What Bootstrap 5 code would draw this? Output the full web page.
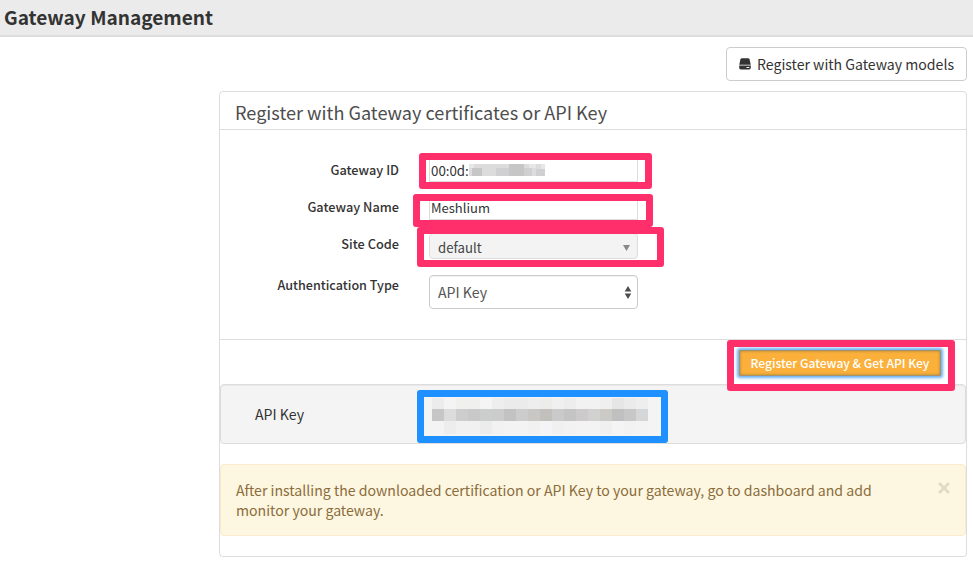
<!DOCTYPE html>
<html lang="en">
<head>
<meta charset="utf-8">
<meta name="viewport" content="width=device-width, initial-scale=1">
<title>Gateway Management</title>
<link href="https://cdn.jsdelivr.net/npm/bootstrap@5.3.0/dist/css/bootstrap.min.css" rel="stylesheet">
<style>
body{font-family:"Noto Sans CJK KR","Noto Sans",sans-serif;font-size:14.12px;line-height:20px;color:#333;background:#fff}
.page-bar{height:37px;background:#ebebeb;border-bottom:2px solid #dedede;padding-left:4px}
.page-bar h1{font-size:19.1px;font-weight:700;line-height:34px;color:#333}
.tools{padding:10px 6px 0 0}
.btn-models{--bs-btn-font-size:14.1px;--bs-btn-line-height:20px;--bs-btn-color:#333;--bs-btn-border-color:#ccc;--bs-btn-border-radius:4px;--bs-btn-bg:#fff;width:241px;height:34px;padding:0 0 1px}
.btn-models svg{margin-right:6px}
.panel{width:748px;height:466px;margin:10px 6px 0 auto;border:1px solid #ddd;border-radius:4px;box-shadow:0 1px 1px rgba(0,0,0,.05)}
.panel-head{height:38px;border-bottom:1px solid #ddd;padding-left:15px;font-size:18.13px;line-height:41px;color:#4d4d4d}
.form-area{height:210px;padding-top:22px;border-bottom:1px solid #ddd}
.field-row{display:grid;grid-template-columns:179px 209px;column-gap:30px;height:37px;align-items:center}
.field-row label{font-size:12.75px;font-weight:500;text-align:right;padding-bottom:1px}
.field-row .form-control{height:23px;padding:0 1px;border:1px solid #ddd;border-radius:0;font-size:13.3px;line-height:20px;color:#333;display:flex;align-items:center}
.field-row .name-box{height:24px;font-size:13px}
.field-row .site-box{height:26px;background:#f3f3f3;border-radius:4px;padding:3px 7px 0 8px;font-size:13.2px;margin-top:3px;color:#444}
.field-row.auth{height:34px;margin-top:12px}
.field-row.auth label{align-self:start;font-size:12.6px}
.field-row .auth-box{height:34px;border-color:#ccc;border-radius:4px;padding:0 5px 0 8px;font-size:14.1px;color:#555;box-shadow:inset 0 1px 1px rgba(0,0,0,.06)}
.action-bar{height:44px;padding:10px 25px 0 0}
.btn-key{--bs-btn-font-size:12.05px;--bs-btn-font-weight:500;--bs-btn-line-height:20px;--bs-btn-color:#fff;--bs-btn-bg:#fbb03b;--bs-btn-border-color:#a99365;--bs-btn-border-radius:1px;width:202px;height:26px;padding:0;border-width:1px;box-shadow:0 0 3px 2px #69b0f5,inset 0 0 3px #a08042}
.key-bar{height:60px;background:#f4f4f4;border:1px solid #ddd;border-radius:4px;padding:0 0 1px 34px;box-shadow:inset 0 1px 1px rgba(0,0,0,.05)}
.notice{height:72px;margin:20px 0 0;background:#fdf6e1;border:1px solid #faebcc;border-radius:4px;padding:15px 15px 0;color:#8a6d3b}
.notice p{width:660px}
/* annotation frames drawn over the form */
.frame{position:absolute;border:7px solid #ff2f6c;border-radius:3px}
.f-id{left:419px;top:153px;width:233px;height:36px}
.f-name{left:413px;top:194px;width:240px;height:33px}
.f-site{left:417px;top:227px;width:247px;height:40px}
.f-btn{left:727px;top:340px;width:228px;height:51px}
.f-key{left:417px;top:390px;width:251px;height:53px;border-color:#1e90ff;background:#f4f4f4}
svg{display:block;flex:none}
</style>
</head>
<body class="position-relative overflow-hidden">
<header class="page-bar"><h1 class="m-0">Gateway Management</h1></header>
<div class="tools d-flex justify-content-end">
  <button class="btn btn-models d-flex align-items-center justify-content-center">
    <svg width="12" height="12" viewBox="0 0 12 12"><path d="M3 .2h6q1.2 0 1.5 1L11.8 6.8H.2L1.5 1.2Q1.8.2 3 .2z" fill="#333"/><path d="M.2 7.6h11.6v2.2q0 1.6-1.6 1.6H1.8Q.2 11.4.2 9.8z" fill="#333"/><path d="M7.5 9.5h2.8" stroke="#fff" stroke-width="1"/></svg>
    <span>Register with Gateway models</span>
  </button>
</div>
<main class="panel">
  <div class="panel-head">Register with Gateway certificates or API Key</div>
  <form class="form-area">
    <div class="field-row"><label>Gateway ID</label>
      <div class="form-control"><span>00:0d:</span>
        <svg width="78" height="13" viewBox="0 0 78 13" shape-rendering="crispEdges"><path fill="#dcdcdc" d="M0 0h76v12H0z"/><path fill="#c6c6c6" d="M3 4h10v8H3zM40 0h15v12H40z"/><path fill="#d0cfd1" d="M27 4h13v8H27zM55 4h8v8h-8zM67 5h9v7h-9z"/><path fill="#e8e7e8" d="M0 0h5v4H0zM60 0h7v4h-7zM72 0h4v5h-4z"/></svg>
      </div></div>
    <div class="field-row"><label>Gateway Name</label><div class="form-control name-box">Meshlium</div></div>
    <div class="field-row"><label>Site Code</label>
      <div class="form-control site-box justify-content-between"><span>default</span><svg width="7" height="6" viewBox="0 0 7 6"><path d="M0 0h7L3.5 6z" fill="#888"/></svg></div></div>
    <div class="field-row auth"><label>Authentication Type</label>
      <div class="form-control auth-box justify-content-between"><span>API Key</span><svg width="8" height="13" viewBox="0 0 8 13"><path d="M.7 5.5 4 0l3.3 5.5zM.7 7.5 4 13l3.3-5.5z" fill="#4d4d4d"/></svg></div></div>
  </form>
  <div class="action-bar d-flex justify-content-end"><button class="btn btn-key">Register Gateway &amp; Get API Key</button></div>
  <div class="key-bar d-flex align-items-center">API Key</div>
  <div class="notice d-flex justify-content-between">
    <p class="m-0">After installing the downloaded certification or API Key to your gateway, go to dashboard and add monitor your gateway.</p>
    <svg width="12" height="18" viewBox="0 0 12 18"><path d="m1 3 10 10M11 3 1 13" stroke="#e3dbc2" stroke-width="2.8"/></svg>
  </div>
</main>
<div class="frame f-id"></div>
<div class="frame f-name"></div>
<div class="frame f-site"></div>
<div class="frame f-btn"></div>
<div class="frame f-key"><svg id="masked-key" width="237" height="39" viewBox="0 0 237 39" shape-rendering="crispEdges"></svg></div>
<script>
// Masked key: three rows of gray cells
const rows = [
  [1, 11, ['ececec','f4f4f4','f0f0ee','f0f0ee','f5f5f5','eeeeee','ebebeb','ebebeb','eeeeee','ececea','f0f0f0','ededed','f2f2f2','f2f2f2','efefef','e6e6e6','ebebeb','eeeeee']],
  [12, 12, ['c6c6c6','dcdcdc','cdcdcd','c9c9c9','cccece','cccccc','c2c2c2','cccccc','c8c7c3','c1c0bc','cacaca','c4c4c4','cdcacb','d1d1cf','cbcac6','c0c0c0','c7c7c7','d5d6d8']],
  [24, 13, ['f4f4f4','ededed','f1f1f1','f1f1f1','ececec','f2f2f2','f3f3f3','f3f3f3','f1f1f1','f4f4f6','f0f0f0','f2f2f2','f3f3f3','f3f3f3','f0f0f0','f4f4f4','f2f2f2','f3f3f3']]
];
document.getElementById('masked-key').innerHTML = rows.map(([y, h, cells]) =>
  cells.map((c, i) => `<rect x="${8 + i * 12}" y="${y}" width="12" height="${h}" fill="#${c}"/>`).join('')).join('');
</script>
<script src="https://cdn.jsdelivr.net/npm/bootstrap@5.3.0/dist/js/bootstrap.bundle.min.js"></script>
</body>
</html>
